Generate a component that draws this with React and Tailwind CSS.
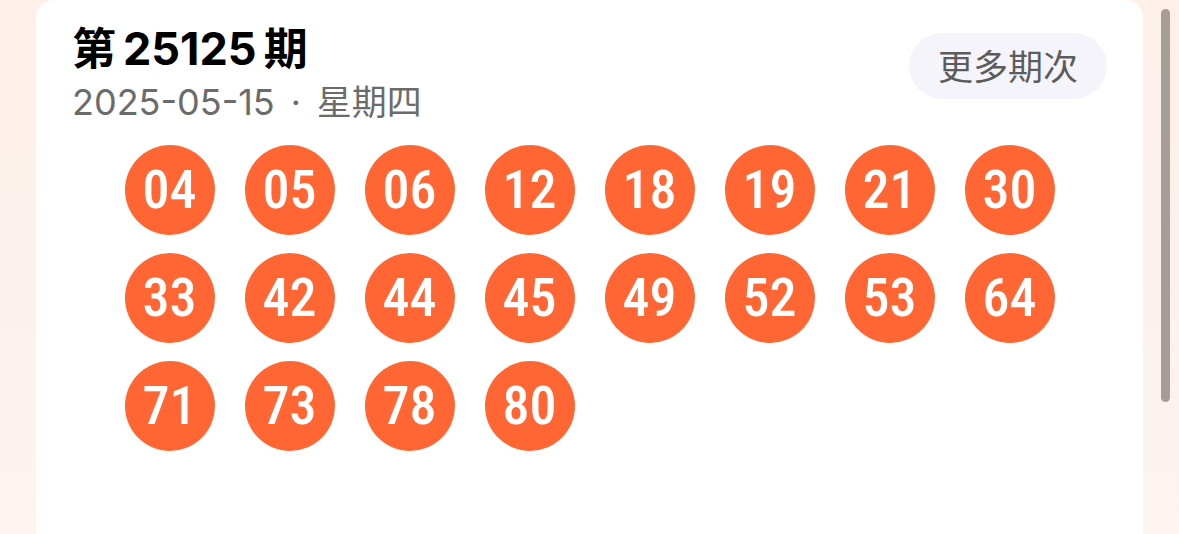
const draw = {
  issue: '25125',
  date: '2025-05-15',
  weekday: '星期四',
  numbers: [
    '04', '05', '06', '12', '18', '19', '21', '30',
    '33', '42', '44', '45', '49', '52', '53', '64',
    '71', '73', '78', '80',
  ],
};

function Ball({ value }) {
  return (
    <li className="flex size-[90px] items-center justify-center rounded-full bg-[#ff6633] font-['Roboto_Condensed','Roboto',sans-serif] text-[54px] leading-none font-medium text-white">
      {value}
    </li>
  );
}

function DrawHeader() {
  return (
    <header className="flex items-start justify-between">
      <div>
        <h1 className="flex gap-[7px] text-[44px] leading-[52px] font-bold text-black">
          <span>第</span>
          <span className="text-[45px]">{draw.issue}</span>
          <span>期</span>
        </h1>
        <p className="flex gap-4 text-[35px] leading-[54px] text-[#6b6b6b]">
          <span className="text-[36px]">{draw.date}</span>
          <span>·</span>
          <span>{draw.weekday}</span>
        </p>
      </div>
      <button
        type="button"
        className="mt-[10px] h-[66px] rounded-full bg-[#f5f4fb] px-[29px] pt-[2px] text-[35px] leading-none text-[#5c5c5c]"
      >
        更多期次
      </button>
    </header>
  );
}

export default function App() {
  return (
    <div className="relative flex min-h-screen flex-col bg-linear-to-b from-[#fef0e9] via-[#fcf1ed] to-[#fdf4ef] px-9 font-['Inter','Noto_Sans_CJK_SC',sans-serif]">
      <main className="flex-1 rounded-t-[18px] bg-white px-9 pt-[23px]">
        <DrawHeader />
        <ul className="mt-4 grid grid-cols-[repeat(8,90px)] justify-center gap-x-[30px] gap-y-[18px]">
          {draw.numbers.map((n) => (
            <Ball key={n} value={n} />
          ))}
        </ul>
      </main>
      <div className="absolute top-[9px] right-[9px] h-[393px] w-[9px] rounded-full bg-[#a69d99]" />
    </div>
  );
}
